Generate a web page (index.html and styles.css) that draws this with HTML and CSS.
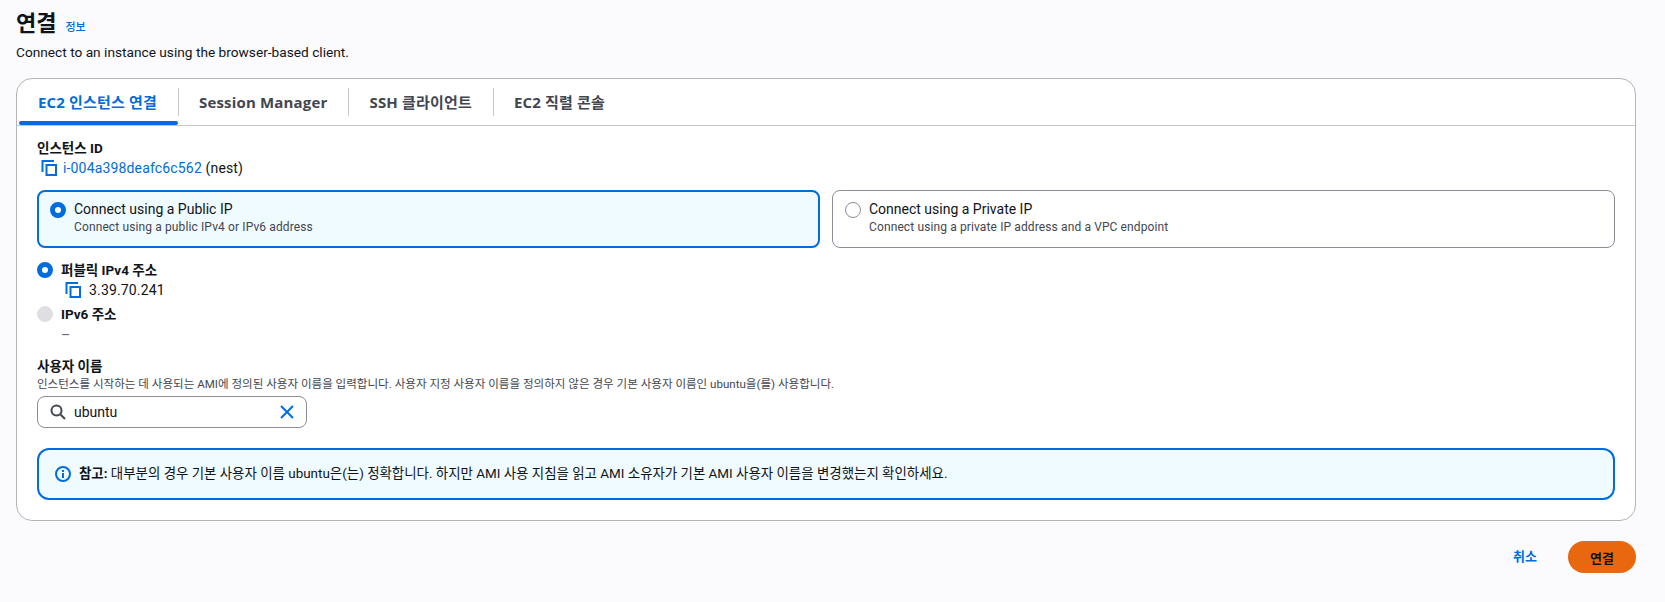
FILE: index.html
```html
<!DOCTYPE html>
<html lang="ko">
<head>
<meta charset="utf-8">
<title>연결</title>
<link rel="stylesheet" href="styles.css">
</head>
<body>
<div class="page">
  <header class="head">
    <h1 class="title">연결 <a class="info">정보</a></h1>
    <p class="sub">Connect to an instance using the browser-based client.</p>
  </header>
  <section class="card">
    <nav class="tabs">
      <div class="tab active">EC2 인스턴스 연결</div>
      <div class="tab">Session Manager</div>
      <div class="tab">SSH 클라이언트</div>
      <div class="tab">EC2 직렬 콘솔</div>
    </nav>
    <div class="body">
      <div class="label">인스턴스 ID</div>
      <div class="copyrow first"><svg class="copy" viewBox="0 0 16 16"><path d="M5.5 5h9.5v10H5.5zM13 1H1.5v11"/></svg><a class="link">i-004a398deafc6c562</a> (nest)</div>
      <div class="tiles">
        <div class="tile on"><span class="radio checked"></span><div><div class="t1">Connect using a Public IP</div><div class="t2">Connect using a public IPv4 or IPv6 address</div></div></div>
        <div class="tile"><span class="radio"></span><div><div class="t1">Connect using a Private IP</div><div class="t2">Connect using a private IP address and a VPC endpoint</div></div></div>
      </div>
      <div class="opt"><span class="radio checked"></span><span class="label">퍼블릭 IPv4 주소</span></div>
      <div class="copyrow indent"><svg class="copy" viewBox="0 0 16 16"><path d="M5.5 5h9.5v10H5.5zM13 1H1.5v11"/></svg>3.39.70.241</div>
      <div class="opt second"><span class="radio off"></span><span class="label">IPv6 주소</span></div>
      <div class="dash">–</div>
      <div class="label user">사용자 이름</div>
      <div class="desc">인스턴스를 시작하는 데 사용되는 AMI에 정의된 사용자 이름을 입력합니다. 사용자 지정 사용자 이름을 정의하지 않은 경우 기본 사용자 이름인 ubuntu을(를) 사용합니다.</div>
      <div class="search">
        <svg class="mag" viewBox="0 0 16 16"><circle cx="6.5" cy="6.5" r="5"/><path d="M10.5 10.5l4.5 4.5"/></svg>
        <span class="val">ubuntu</span>
        <svg class="x" viewBox="0 0 16 16"><path d="M2 2l12 12M14 2L2 14"/></svg>
      </div>
      <div class="alert">
        <svg class="i" viewBox="0 0 16 16"><circle cx="8" cy="8" r="7"/><path d="M8 7v5M8 4v2"/></svg>
        <div><b>참고:</b> 대부분의 경우 기본 사용자 이름 ubuntu은(는) 정확합니다. 하지만 AMI 사용 지침을 읽고 AMI 소유자가 기본 AMI 사용자 이름을 변경했는지 확인하세요.</div>
      </div>
    </div>
  </section>
  <footer class="actions">
    <a class="cancel">취소</a>
    <button class="primary">연결</button>
  </footer>
</div>
</body>
</html>
```
FILE: styles.css
```css
*{box-sizing:border-box}
html,body{margin:0;padding:0}
body{background:#fbfbfe;color:#0f141a;font-family:Roboto,"Noto Sans CJK KR",sans-serif;font-size:14px;line-height:20px;width:1665px;height:602px;overflow:hidden}
.page{padding:0 29px 0 16px}
.head{height:78px;padding-top:6px}
.title{margin:0;font-size:22px;line-height:30px;font-weight:700;font-family:"Noto Sans CJK KR",sans-serif;display:flex;align-items:baseline;gap:9px}
.info{font-size:11px;font-weight:500;color:#006ce0;line-height:12px}
.sub{margin:6px 0 0;line-height:20px;font-size:13.7px}
.card{background:#fff;border:1px solid #b4b4bb;border-radius:16px;height:443px;overflow:hidden}
.tabs{display:flex;height:47px;border-bottom:1px solid #c6c6cd;padding-left:2px;align-items:stretch}
.tab{font-family:"Open Sans","Noto Sans CJK KR",sans-serif;font-size:15px;letter-spacing:.17px;font-weight:700;display:flex;align-items:center;padding:0 21px;color:#424650;position:relative}
.tab+.tab::before{content:"";position:absolute;left:0;top:9px;height:28px;width:1px;background:#c6c6cd}
.tab.active{color:#006ce0;padding-left:19px}
.tab.active::after{content:"";position:absolute;left:0;right:0;bottom:0;height:4px;border-radius:2px;background:#006ce0}
.body{padding:13px 20px 0}
.label{font-weight:700;font-size:13.5px;line-height:18px}
.link{color:#006ce0}
.copyrow{display:flex;align-items:center;line-height:20px;white-space:pre;margin-top:1px;letter-spacing:.16px}
.first{padding-left:4px}
.copy{width:16px;height:16px;fill:none;stroke:#006ce0;stroke-width:2;margin-right:6px}
.indent .copy{margin-right:8px}
.tiles{display:grid;grid-template-columns:1fr 1fr;gap:12px;margin-top:12px}
.tile{height:58px;border:1px solid #8c8c94;border-radius:8px;display:flex;gap:8px;padding:8px 12px}
.tile.on{border:2px solid #006ce0;background:#f0fbff;padding:7px 11px}
.t1{font-size:14px;line-height:20px}
.t2{font-size:12px;line-height:16px;color:#424650;letter-spacing:.12px}
.radio{width:16px;height:16px;border-radius:50%;border:1px solid #8c8c94;flex:none;margin-top:3px;background:#fff}
.radio.checked{border:5px solid #006ce0}
.radio.off{background:#dedee3;border-color:#dedee3}
.opt{display:flex;gap:8px;align-items:center;margin-top:12px;height:20px}
.opt .radio{margin-top:0}
.opt.second{margin-top:4px}
.indent{padding-left:28px;margin-top:0}
.dash{padding-left:24px;line-height:20px;color:#656871;margin-top:1px}
.user{margin-top:12px}
.desc{font-size:11.55px;line-height:16px;color:#424650;margin-top:1px}
.search{width:270px;height:32px;border:1px solid #8c8c94;border-radius:8px;margin-top:4px;display:flex;align-items:center;padding:0 11px 0 12px;gap:8px}
.mag{width:16px;height:16px;fill:none;stroke:#424650;stroke-width:2}
.val{flex:1}
.x{width:16px;height:16px;fill:none;stroke:#006ce0;stroke-width:2}
.alert{margin-top:20px;height:52px;border:2px solid #006ce0;border-radius:12px;background:#f0fbff;display:flex;align-items:center;gap:8px;padding:0 16px;font-size:13.45px}
.i{width:16px;height:16px;fill:none;stroke:#006ce0;stroke-width:2;flex:none}
.actions{display:flex;justify-content:flex-end;align-items:center;gap:31px;margin-top:20px}
.cancel{color:#006ce0;font-weight:700;font-size:13px}
.primary{width:68px;height:32px;border:0;border-radius:16px;background:#e9680f;color:#0f141a;font:700 13px "Noto Sans CJK KR",sans-serif}
```
